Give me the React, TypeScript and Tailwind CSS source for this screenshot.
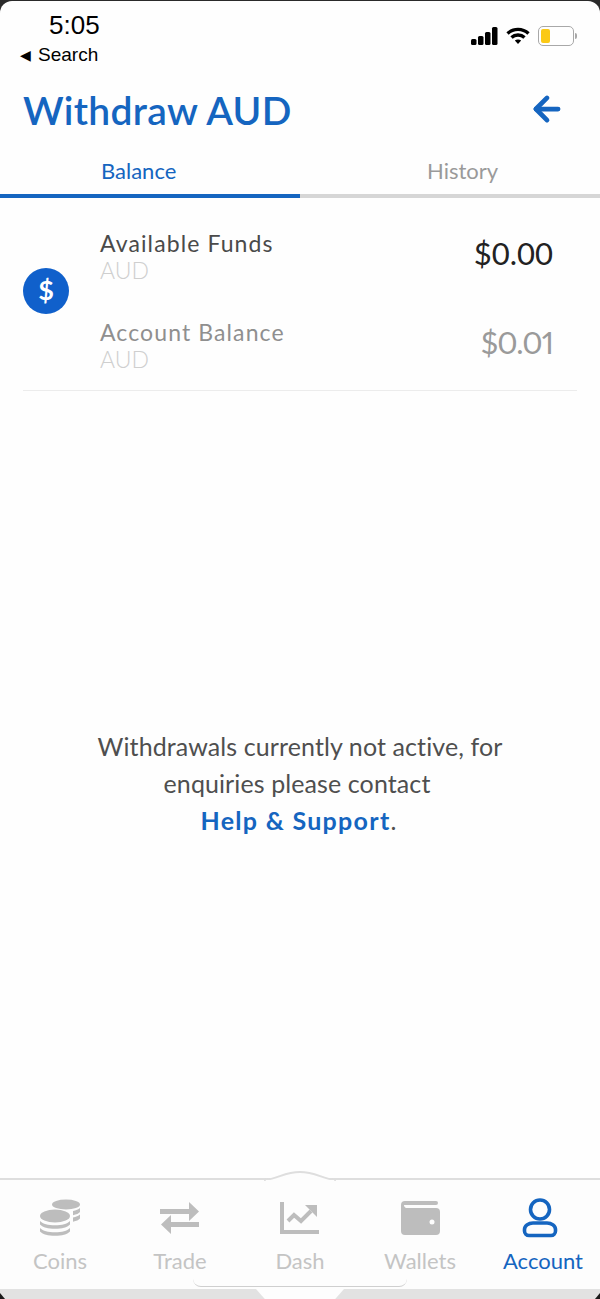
import { ArrowLeft } from "lucide-react"

const BLUE = "text-[#1565c0]"

function Signal() {
  return (
    <svg width="27" height="18" viewBox="0 0 27 18" className="fill-black">
      <rect x="0" y="12" width="5.500" height="6" rx="1.500" />
      <rect x="7" y="9" width="5.500" height="9" rx="1.500" />
      <rect x="14" y="5" width="5.500" height="13" rx="1.500" />
      <rect x="21" y="0" width="5.500" height="18" rx="1.500" />
    </svg>
  )
}

function Wifi() {
  return (
    <svg width="24" height="18" viewBox="0 0 24 18" fill="none" stroke="#000" strokeWidth="3.4">
      <path d="M1.500 6.500C7.500 1 16.500 1 22.500 6.500" />
      <path d="M5.500 10.500C9 7.200 15 7.200 18.500 10.500" />
      <path d="M8.800 13.600 12 17l3.200-3.400c-1.800-1.600-4.600-1.600-6.400 0z" fill="#000" stroke="none" />
    </svg>
  )
}

function Battery() {
  return (
    <div className="flex items-center gap-[1px]">
      <div className="flex h-[20px] w-[36px] items-stretch rounded-[5px] border border-[#a8a8a8] p-[2px]">
        <div className="w-[9px] rounded-[2px] bg-[#fbc915]" />
      </div>
      <div className="h-[6px] w-[2px] rounded-r-full bg-[#a8a8a8]" />
    </div>
  )
}

function CoinsIcon() {
  return (
    <svg width="42" height="40" viewBox="0 0 42 40" className="fill-[#bdbdbd]">
      <ellipse cx="27" cy="6.500" rx="14" ry="5" />
      <path d="M34 13c3-.6 5.500-1.600 7-3v4c-1.300 1.500-3.500 2.500-7 3.200z" />
      <path d="M34 19.500c3-.6 5.500-1.600 7-3v4c-1.300 1.500-3.500 2.500-7 3.200z" />
      <ellipse cx="16" cy="18" rx="15" ry="6.500" />
      <path d="M1 23c3 3 8 4.300 15 4.300S28 26 31 23v3.500c-3 3-8 4.300-15 4.300S4 29.500 1 26.500z" />
      <path d="M1 30c3 3 8 4.300 15 4.300S28 33 31 30v3.500c-3 3-8 4.300-15 4.300S4 36.500 1 33.500z" />
    </svg>
  )
}

function TradeIcon() {
  return (
    <svg width="40" height="32" viewBox="0 0 40 32" className="fill-[#bdbdbd]">
      <path d="M0 7h29V0l10 9.500L29 19v-7H0z" />
      <path d="M39 20H11v-7L1 22.500 11 32v-7h28z" />
    </svg>
  )
}

function DashIcon() {
  return (
    <svg width="40" height="32" viewBox="0 0 40 32" fill="none" stroke="#bdbdbd">
      <path d="M2 0v30h37" strokeWidth="4" />
      <path d="M8 19l6-6 7 6 10-10" strokeWidth="4" />
      <path d="M25 3h12v12z" fill="#bdbdbd" stroke="none" />
    </svg>
  )
}

function WalletIcon() {
  return (
    <svg width="39" height="34" viewBox="0 0 39 34" className="fill-[#bdbdbd]">
      <path d="M4 0h31a2 2 0 0 1 0 4H3v.500A3 3 0 0 0 5 7h30a4 4 0 0 1 4 4v19a4 4 0 0 1-4 4H4a4 4 0 0 1-4-4V4a4 4 0 0 1 4-4z" />
      <circle cx="31" cy="21" r="2.500" fill="#fdfdfd" />
    </svg>
  )
}

function AccountIcon() {
  return (
    <svg width="36" height="40" viewBox="0 0 36 40" fill="none" stroke="#1565c0" strokeWidth="3.6">
      <circle cx="18" cy="11.500" r="9.500" />
      <path d="M11 25h14a8.500 6.500 0 0 1 8.500 6.500V33a4.500 4.500 0 0 1-4.500 4.500H7A4.500 4.500 0 0 1 2.500 33v-1.500A8.500 6.500 0 0 1 11 25z" />
    </svg>
  )
}

const navItems = [
  { label: "Coins", icon: <CoinsIcon /> },
  { label: "Trade", icon: <TradeIcon /> },
  { label: "Dash", icon: <DashIcon /> },
  { label: "Wallets", icon: <WalletIcon /> },
  { label: "Account", icon: <AccountIcon />, active: true },
]

function BalanceLine({
  label,
  amount,
  labelColor,
  amountColor,
}: {
  label: string
  amount: string
  labelColor: string
  amountColor: string
}) {
  return (
    <div className="flex items-center justify-between pr-[24px]">
      <div>
        <div className={`text-[23px] leading-[28px] tracking-[1.1px] ${labelColor}`}>{label}</div>
        <div className="text-[23px] leading-[26px] font-light text-[#cfcfcf]">AUD</div>
      </div>
      <div className={`pb-[6px] text-[31px] leading-none ${amountColor}`}>{amount}</div>
    </div>
  )
}

export default function App() {
  return (
    <div className="h-[1299px] w-[600px] overflow-hidden bg-[#2a2a2a] pt-[1px]">
      <div className="relative flex h-[1298px] flex-col overflow-hidden rounded-t-[12px] bg-[#fefefe] font-['Lato',sans-serif]">
        {/* status bar */}
        <div className="flex h-[69px] justify-between pr-[23px] font-['Liberation_Sans',sans-serif] text-black">
          <div className="pl-[20px] pt-[9px]">
            <div className="pl-[29px] text-[26px] leading-[30px]">5:05</div>
            <div className="flex items-center gap-[7px] pt-[2px] text-[19px] leading-[26px]">
              <span className="text-[14px]">◀</span>
              Search
            </div>
          </div>
          <div className="flex items-center gap-[8px]">
            <Signal />
            <Wifi />
            <Battery />
          </div>
        </div>

        {/* header */}
        <div className="flex h-[80px] items-center justify-between pl-[23px] pr-[34px]">
          <h1 className={`text-[39px] font-semibold tracking-[0.3px] ${BLUE}`}>Withdraw AUD</h1>
          <ArrowLeft size={38} strokeWidth={3} className={`mb-[2px] ${BLUE}`} />
        </div>

        {/* tabs */}
        <div className="grid h-[48px] grid-cols-2 text-[22px]">
          <div className={`border-b-[4px] border-[#1565c0] pl-[101px] pt-[4px] ${BLUE}`}>Balance</div>
          <div className="border-b-[4px] border-[#d6d6d6] pl-[127px] pt-[4px] text-[#9a9a9a]">History</div>
        </div>

        {/* balances */}
        <div className="mx-[23px] mt-[31px] flex items-center border-b border-[#ececec] pb-[18px]">
          <div className="mb-[20px] flex h-[46px] w-[46px] shrink-0 items-center justify-center rounded-full bg-[#1060cb] text-[27px] font-bold text-white">
            $
          </div>
          <div className="ml-[31px] flex flex-1 flex-col gap-[35px]">
            <BalanceLine label="Available Funds" amount="$0.00" labelColor="text-[#4a4a4a]" amountColor="text-[#222]" />
            <BalanceLine
              label="Account Balance"
              amount="$0.01"
              labelColor="text-[#8f8f8f]"
              amountColor="text-[#9a9a9a] proportional-nums tracking-[-1px]"
            />
          </div>
        </div>

        {/* message */}
        <div className="flex flex-1 flex-col items-center justify-center pb-[3px] text-center text-[25px] leading-[37px] tracking-[0.1px] text-[#4f4f4f]">
          <p>Withdrawals currently not active, for</p>
          <p className="pr-[6px]">enquiries please contact</p>
          <p className="pr-[3px]">
            <span className={`font-bold tracking-[1.3px] ${BLUE}`}>Help &amp; Support</span>.
          </p>
        </div>

        {/* bottom nav */}
        <div className="relative h-[111px] border-t-[2px] border-[#dedede] bg-[#fdfdfd]">
          <svg width="72" height="10" viewBox="0 0 72 10" className="absolute left-[264px] top-[-9px]">
            <path d="M0 9C14 8 20 1 36 1s22 7 36 8" fill="#fdfdfd" stroke="#dedede" strokeWidth="2" />
            <path d="M2 10h68V9H2z" fill="#fdfdfd" />
          </svg>
          <div className="relative grid grid-cols-5 pt-[14px]">
            {navItems.map((item) => (
              <div key={item.label} className="flex flex-col items-center">
                <div className="flex h-[48px] items-center">{item.icon}</div>
                <span
                  className={
                    item.active
                      ? `mt-[6px] pl-[6px] text-[22px] leading-[26px] ${BLUE}`
                      : "mt-[6px] text-[22px] leading-[26px] text-[#c4c4c4]"
                  }
                >
                  {item.label}
                </span>
              </div>
            ))}
          </div>
          <div className="absolute bottom-[2px] left-[193px] h-[10px] w-[214px] rounded-b-[8px] border-b border-[#cfcfcf]" />
        </div>

        {/* bottom strip */}
        <div className="relative h-[10px] bg-[#e2e2e2]">
          <div className="absolute left-[256px] top-0 h-[10px] w-[88px] bg-[#fdfdfd] [clip-path:polygon(0_0,100%_0,90%_100%,10%_100%)]" />
          <div className="absolute bottom-0 left-0 h-[6px] w-[5px] bg-[#1a1a1a] [clip-path:polygon(0_0,100%_100%,0_100%)]" />
          <div className="absolute bottom-0 right-0 h-[6px] w-[5px] bg-[#1a1a1a] [clip-path:polygon(100%_0,100%_100%,0_100%)]" />
        </div>
      </div>
    </div>
  )
}
